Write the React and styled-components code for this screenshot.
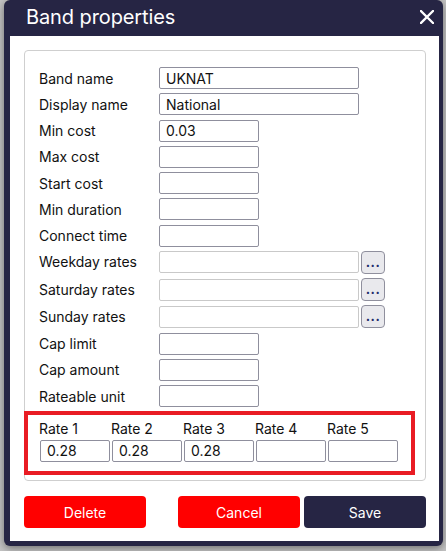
import React from "react";
import styled, { createGlobalStyle } from "styled-components";

const Global = createGlobalStyle`
  html, body { margin: 0; padding: 0; }
  body {
    background: #c4c4c4;
    font-family: Inter, "Noto Sans", sans-serif;
    width: 446px;
    height: 551px;
    overflow: hidden;
  }
`;

const Dialog = styled.div`
  box-sizing: border-box;
  margin-left: 4px;
  width: 439px;
  height: 546px;
  background: #262544;
  border-radius: 6px;
  padding: 0 4px 5px 6px;
  display: flex;
  flex-direction: column;
  box-shadow: 0 2px 8px rgba(0, 0, 0, 0.45);
`;

const Header = styled.div`
  height: 36px;
  display: flex;
  align-items: center;
  justify-content: space-between;
  padding: 0 5px 2px 16px;
  box-sizing: border-box;
`;

const Title = styled.h1`
  margin: 0;
  font-size: 20px;
  font-weight: 400;
  color: #ffffff;
  letter-spacing: -0.1px;
`;

const CloseButton = styled.button`
  border: 0;
  background: none;
  padding: 0;
  width: 14px;
  height: 14px;
  display: flex;
  cursor: pointer;
`;

const Body = styled.div`
  flex: 1;
  background: #ffffff;
  padding: 14px 13px 13px 14px;
  display: flex;
  flex-direction: column;
`;

const Panel = styled.div`
  box-sizing: border-box;
  height: 431px;
  border: 1px solid #cfcfcf;
  border-radius: 4px;
  padding: 16px 0 0 14px;
`;

const FormGrid = styled.div`
  display: grid;
  grid-template-columns: 120px auto;
  row-gap: 4.25px;
`;

const Label = styled.label`
  font-size: 14px;
  color: #111;
  display: flex;
  align-items: center;
  height: 22px;
`;

const FieldLine = styled.div`
  display: flex;
  align-items: center;
  gap: 2px;
`;

const Input = styled.input`
  box-sizing: border-box;
  width: ${(p) => p.$w}px;
  height: 22px;
  border: 1px solid ${(p) => (p.disabled ? "#c9c9c9" : "#8f8f9d")};
  border-radius: 2px;
  background: #fff;
  font-family: Inter, "Noto Sans", sans-serif;
  font-size: 14px;
  color: #111;
  padding: 0 6px;
  margin: 0;
  outline: none;
`;

const DotsButton = styled.button`
  box-sizing: border-box;
  width: 24px;
  height: 23px;
  border: 1px solid #8f8f9d;
  border-radius: 4px;
  background: #e9e9ed;
  font-family: Inter, "Noto Sans", sans-serif;
  font-size: 13px;
  font-weight: 700;
  letter-spacing: 0.5px;
  color: #1b2a6b;
  padding: 0 0 4px;
  display: flex;
  align-items: flex-end;
  justify-content: center;
  line-height: 1;
`;

const RateBox = styled.div`
  box-sizing: border-box;
  width: 391px;
  margin: 3.5px 0 0 -15px;
  border: 4px solid #e91c24;
  padding: 4px 0 9px 11px;
  display: flex;
`;

const RateColumn = styled.div`
  width: 72px;
  display: flex;
  flex-direction: column;
`;

const RateLabel = styled.div`
  font-size: 14px;
  color: #111;
  height: 20px;
  line-height: 20px;
  margin-bottom: 1px;
`;

const RateInput = styled(Input)`
  margin-left: 1px;
`;

const Footer = styled.div`
  margin-top: 15px;
  display: flex;
  gap: 4px;
`;

const Button = styled.button`
  box-sizing: border-box;
  width: 122px;
  height: 32px;
  border: 0;
  border-radius: 4px;
  background: ${(p) => (p.$variant === "dark" ? "#262544" : "#ff0000")};
  color: #fff;
  font-family: Inter, "Noto Sans", sans-serif;
  font-size: 14px;
  margin-right: ${(p) => (p.$spaced ? "28px" : "0")};
`;

const fields = [
  { label: "Band name", value: "UKNAT", w: 200 },
  { label: "Display name", value: "National", w: 200 },
  { label: "Min cost", value: "0.03", w: 100 },
  { label: "Max cost", value: "", w: 100 },
  { label: "Start cost", value: "", w: 100 },
  { label: "Min duration", value: "", w: 100 },
  { label: "Connect time", value: "", w: 100 },
  { label: "Weekday rates", value: "", w: 200, picker: true },
  { label: "Saturday rates", value: "", w: 200, picker: true },
  { label: "Sunday rates", value: "", w: 200, picker: true },
  { label: "Cap limit", value: "", w: 100 },
  { label: "Cap amount", value: "", w: 100 },
  { label: "Rateable unit", value: "", w: 100 },
];

const rates = [
  { label: "Rate 1", value: "0.28" },
  { label: "Rate 2", value: "0.28" },
  { label: "Rate 3", value: "0.28" },
  { label: "Rate 4", value: "" },
  { label: "Rate 5", value: "" },
];

export default function App() {
  return (
    <>
      <Global />
      <Dialog>
        <Header>
          <Title>Band properties</Title>
          <CloseButton aria-label="Close">
            <svg width="14" height="14" viewBox="0 0 14 14">
              <path d="M1 1 L13 13 M13 1 L1 13" stroke="#fff" strokeWidth="2.3" strokeLinecap="square" />
            </svg>
          </CloseButton>
        </Header>
        <Body>
          <Panel>
            <FormGrid>
              {fields.map((f) => (
                <React.Fragment key={f.label}>
                  <Label>{f.label}</Label>
                  <FieldLine>
                    <Input $w={f.w} defaultValue={f.value} disabled={!!f.picker} />
                    {f.picker && <DotsButton>...</DotsButton>}
                  </FieldLine>
                </React.Fragment>
              ))}
            </FormGrid>
            <RateBox>
              {rates.map((r) => (
                <RateColumn key={r.label}>
                  <RateLabel>{r.label}</RateLabel>
                  <RateInput $w={70} defaultValue={r.value} />
                </RateColumn>
              ))}
            </RateBox>
          </Panel>
          <Footer>
            <Button $spaced>Delete</Button>
            <Button>Cancel</Button>
            <Button $variant="dark">Save</Button>
          </Footer>
        </Body>
      </Dialog>
    </>
  );
}
